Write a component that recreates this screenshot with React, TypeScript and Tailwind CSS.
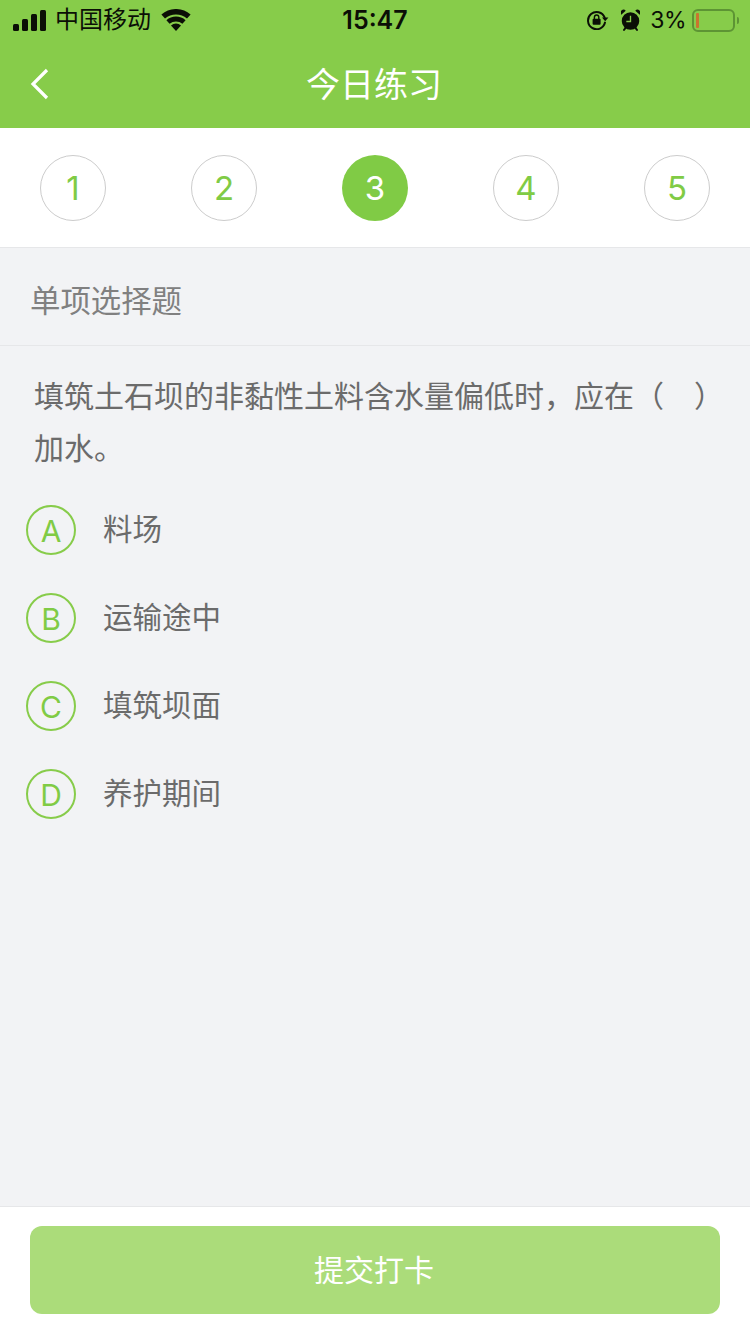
const FONT = "font-['Inter','Noto_Sans_CJK_SC',sans-serif]";

const steps = [1, 2, 3, 4, 5];
const current = 3;

const options = [
  { key: "A", text: "料场" },
  { key: "B", text: "运输途中" },
  { key: "C", text: "填筑坝面" },
  { key: "D", text: "养护期间" },
];

function SignalIcon() {
  return (
    <svg width="34" height="21" viewBox="0 0 34 21" fill="#0b0f06">
      <rect x="0" y="14" width="6" height="7" rx="1.5" />
      <rect x="9" y="9" width="6" height="12" rx="1.5" />
      <rect x="18" y="4" width="6" height="17" rx="1.5" />
      <rect x="27" y="0" width="6" height="21" rx="1.5" />
    </svg>
  );
}

function WifiIcon() {
  return (
    <svg width="30" height="22" viewBox="0 0 30 22" fill="#0b0f06">
      <path d="M15 22l-5-5.6a7.4 7.4 0 0 1 10 0z" />
      <path d="M8.6 14.8L5.4 11.2a14.4 14.4 0 0 1 19.2 0l-3.2 3.6a10 10 0 0 0-12.8 0z" />
      <path d="M4 9.6L0.4 5.6a21.8 21.8 0 0 1 29.2 0L26 9.6a16.8 16.8 0 0 0-22 0z" />
    </svg>
  );
}

function RotationLockIcon() {
  return (
    <svg width="22" height="20" viewBox="0 0 22 20" fill="none">
      <path d="M17.6 7.4A8.6 8.6 0 1 0 18 12.6" stroke="#0b0f06" strokeWidth="2" strokeLinecap="round" />
      <path d="M15 7.4h6.4l-3.2 3.8z" fill="#0b0f06" />
      <rect x="5.6" y="8.8" width="8" height="6" rx="1" fill="#0b0f06" />
      <path d="M7.4 9V7.2a2.2 2.2 0 0 1 4.4 0V9" stroke="#0b0f06" strokeWidth="1.4" />
    </svg>
  );
}

function AlarmIcon() {
  return (
    <svg width="19" height="22" viewBox="0 0 20 22" fill="none">
      <circle cx="10" cy="12" r="9.2" fill="#0b0f06" />
      <path d="M10 6.5V12.6H5.6" stroke="#87cc4a" strokeWidth="1.4" />
      <path d="M0.2 5.4L5 1.2A3 3 0 0 0 0.2 5.4z" fill="#0b0f06" />
      <path d="M19.8 5.4L15 1.2A3 3 0 0 1 19.8 5.4z" fill="#0b0f06" />
      <path d="M4.6 19.5L3.2 21.4M15.4 19.5L16.8 21.4" stroke="#0b0f06" strokeWidth="2" strokeLinecap="round" />
    </svg>
  );
}

function BatteryIcon() {
  return (
    <div className="flex items-center gap-[2px]">
      <div className="flex h-[23px] w-[43px] items-center rounded-[6px] border-2 border-[#5d9434] pl-[2px]">
        <div className="h-[15px] w-[3px] rounded-[1px] bg-[#c9752f]" />
      </div>
      <div className="h-[7px] w-[2px] rounded-r-sm bg-[#5d9434]" />
    </div>
  );
}

export default function App() {
  return (
    <div className={`${FONT} flex h-[1334px] w-[750px] flex-col bg-[#f2f3f5]`}>
      {/* Header */}
      <header className="bg-[#87cc4a]">
        <div className="flex h-10 items-center pl-[13px] pr-[11px] text-[#0b0f06]">
          <div className="flex flex-1 items-center">
            <SignalIcon />
            <span className="ml-[8px] text-[24px] leading-none">中国移动</span>
            <span className="ml-[10px]"><WifiIcon /></span>
          </div>
          <span className="-ml-[2px] text-[25px] font-semibold leading-none">15:47</span>
          <div className="flex flex-1 items-center justify-end">
            <RotationLockIcon />
            <span className="ml-[12px]"><AlarmIcon /></span>
            <span className="ml-[10px] text-[23px] font-normal leading-none tracking-[-0.5px]">3%</span>
            <span className="ml-[6px]"><BatteryIcon /></span>
          </div>
        </div>
        <div className="flex h-[88px] items-center pl-[30px] pr-[32px]">
          <div className="flex-1">
            <svg width="20" height="32" viewBox="0 0 20 32" fill="none">
              <path d="M17 2L3 16l14 14" stroke="#fff" strokeWidth="3.2" />
            </svg>
          </div>
          <h1 className="pt-[1px] text-[34px] font-normal leading-none text-white">今日练习</h1>
          <div className="flex-1" />
        </div>
      </header>

      {/* Step numbers */}
      <div className="flex h-[120px] items-center justify-between border-b border-[#e6e7e9] bg-white px-10 pt-[1px]">
        {steps.map((n) => (
          <div
            key={n}
            className={
              n === current
                ? "flex h-[66px] w-[66px] items-center justify-center rounded-full bg-[#80cb45] pt-[2px] text-[33px] text-white"
                : "flex h-[66px] w-[66px] items-center justify-center rounded-full border border-[#cccccc] pt-[2px] text-[33px] text-[#80cb45]"
            }
          >
            {n}
          </div>
        ))}
      </div>

      {/* Question */}
      <main className="flex-1">
        <div className="flex h-[98px] items-center border-b border-[#e6e7e9] pl-[30px] pt-[10px] text-[30.4px] text-[#808080]">
          单项选择题
        </div>
        <p className="pl-[34px] pr-[25px] pt-6 text-[30px] leading-[52px] text-[#6b6b6b]">
          填筑土石坝的非黏性土料含水量偏低时，应在（&#12288;）加水。
        </p>
        <ul className="mt-[31px] flex flex-col gap-[38px] pl-[26px]">
          {options.map((o) => (
            <li key={o.key} className="flex h-[50px] items-center">
              <span className="flex h-[50px] w-[50px] items-center justify-center rounded-full border-2 border-[#87cc4a] pt-[2px] text-[30px] text-[#80cb45]">
                {o.key}
              </span>
              <span className="ml-[27px] text-[29.5px] leading-none text-[#6b6b6b]">{o.text}</span>
            </li>
          ))}
        </ul>
      </main>

      {/* Submit */}
      <footer className="flex h-[128px] items-start border-t border-[#e6e7e9] bg-white px-[30px] pt-[19px]">
        <button className="h-[88px] w-full rounded-[12px] bg-[#abdc7a] pr-[2px] text-[30px] text-white">提交打卡</button>
      </footer>
    </div>
  );
}
